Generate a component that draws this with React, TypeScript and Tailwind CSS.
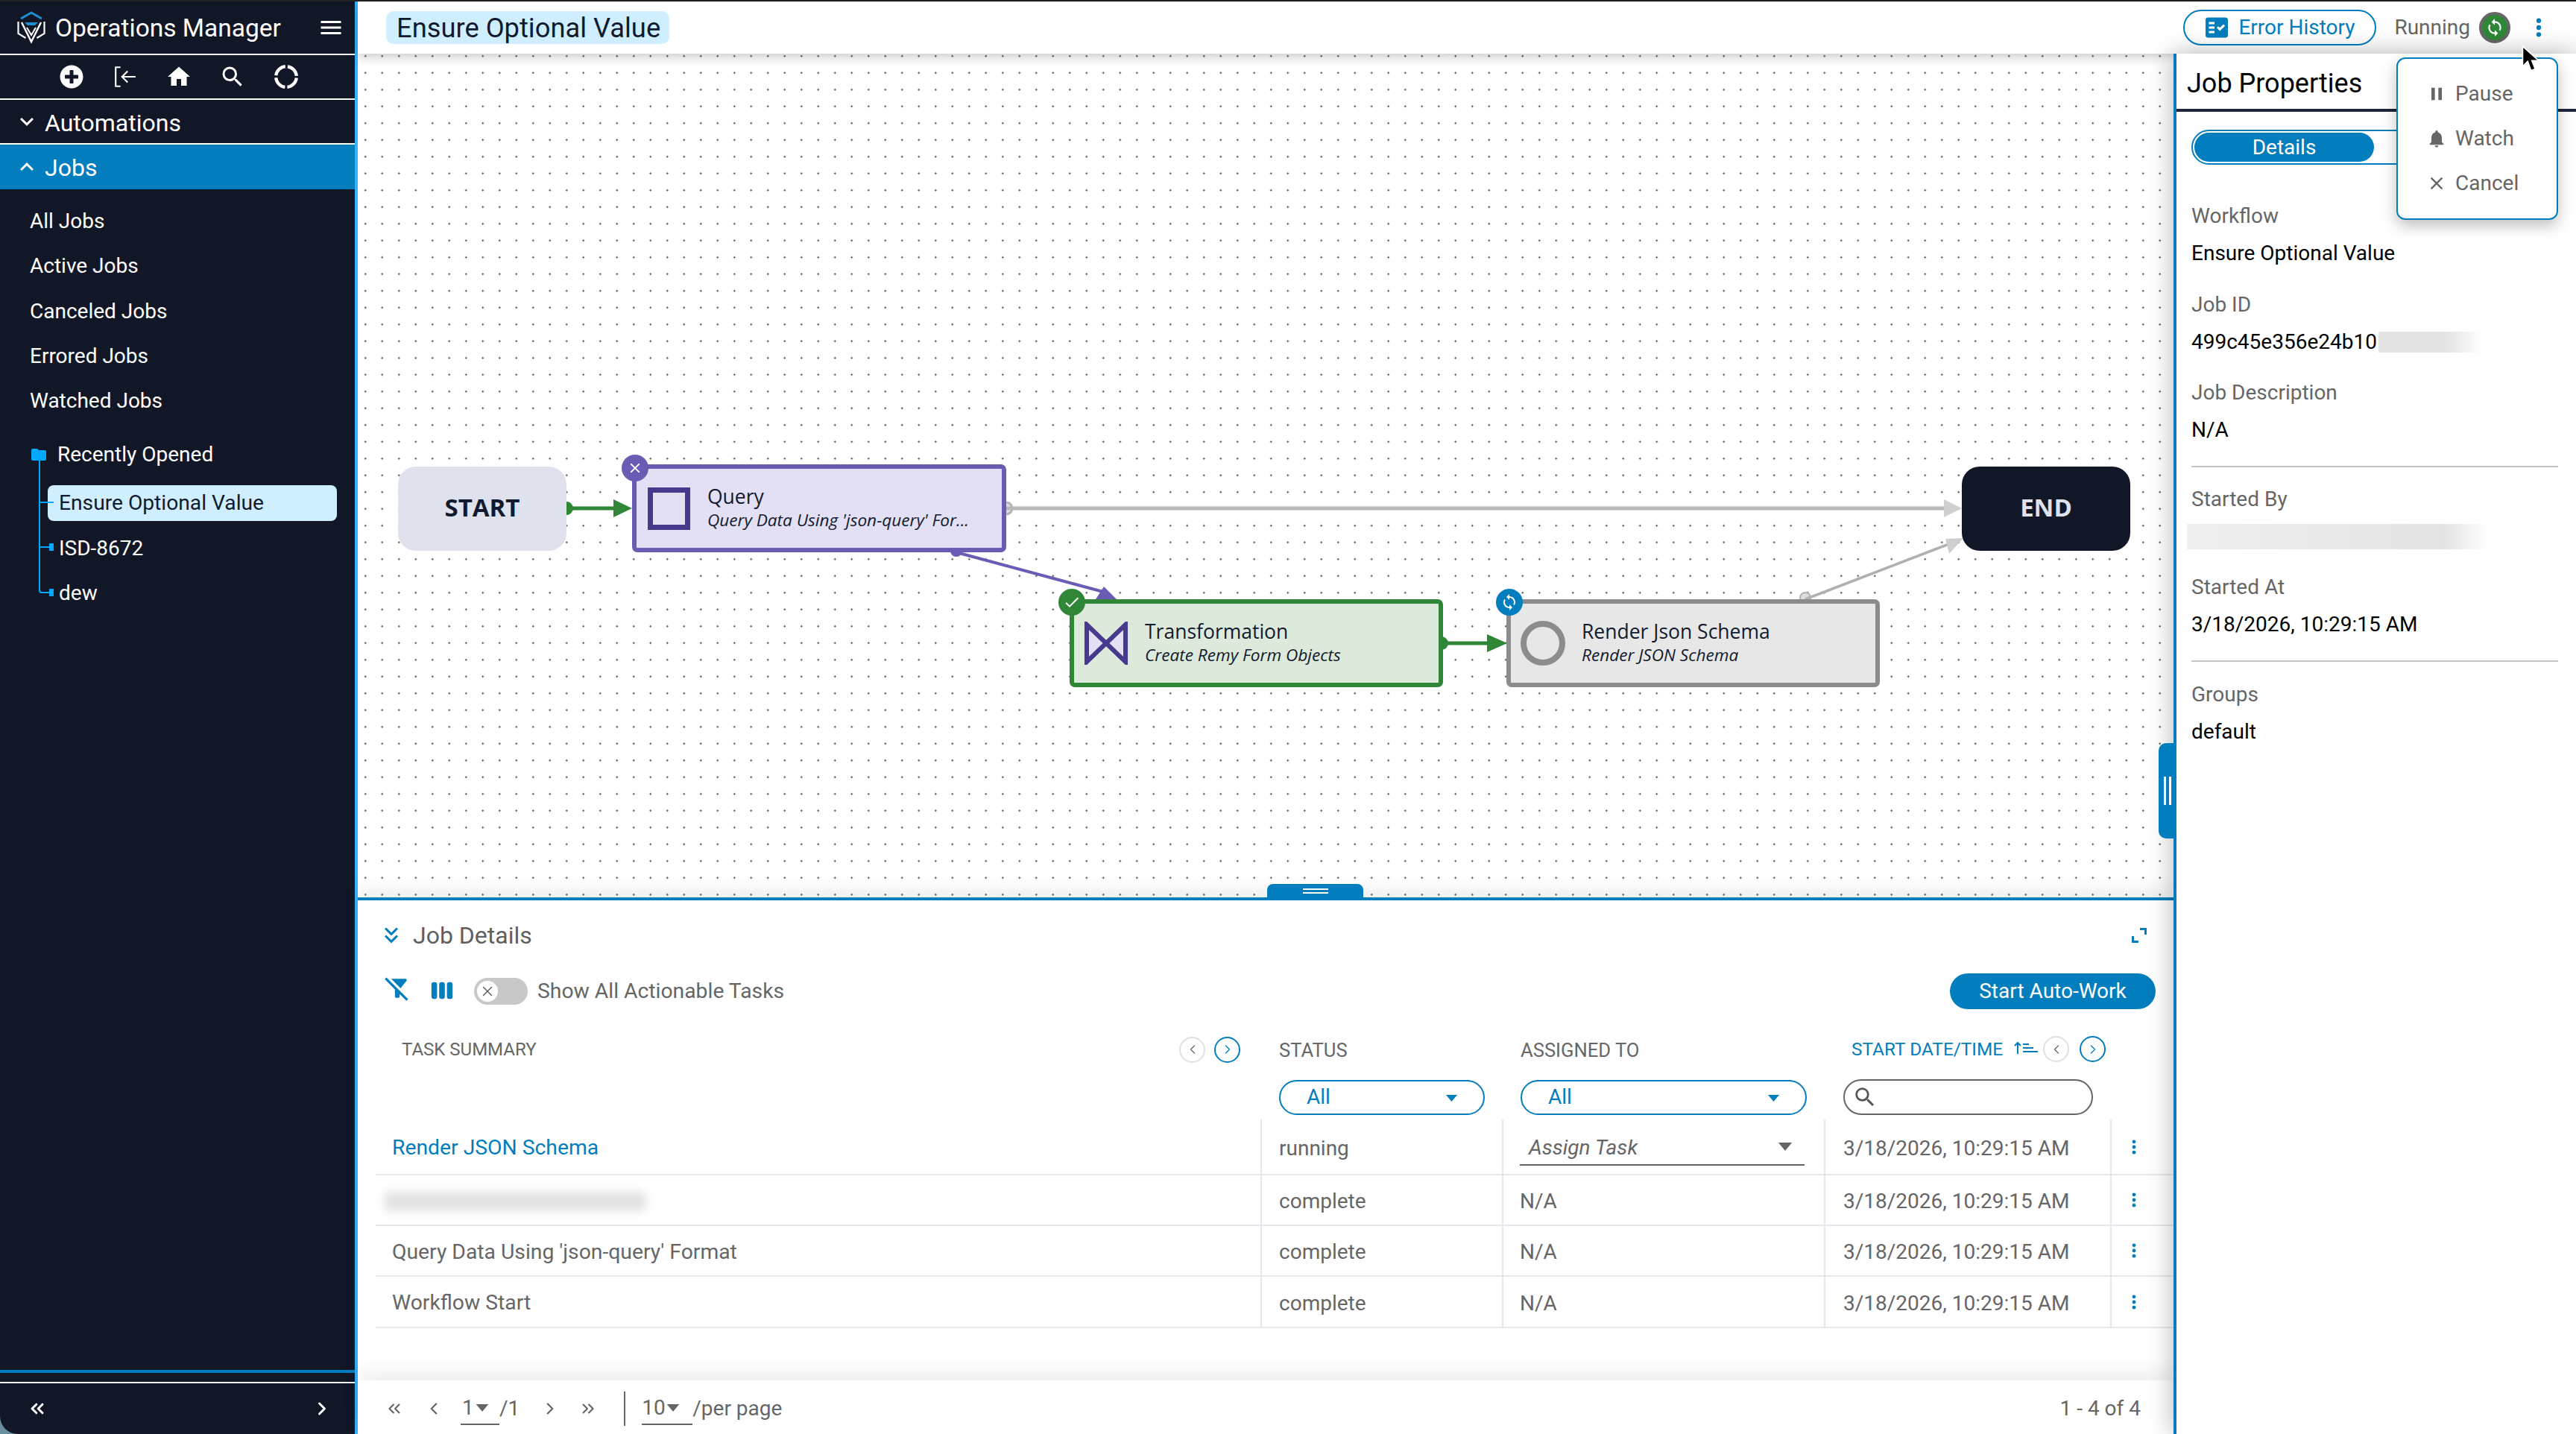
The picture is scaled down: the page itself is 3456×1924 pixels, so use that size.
import type { ReactNode } from "react";
import { ChevronLeft, ChevronRight, ChevronsLeft, ChevronsRight, X } from "lucide-react";
import { FaPlusCircle } from "react-icons/fa";
import {
  MdCheck,
  MdClose,
  MdFactCheck,
  MdFilterAltOff,
  MdFolder,
  MdHome,
  MdKeyboardArrowDown,
  MdKeyboardArrowUp,
  MdKeyboardDoubleArrowDown,
  MdMenu,
  MdNotifications,
  MdPause,
  MdSearch,
  MdSync,
  MdViewWeek,
} from "react-icons/md";

const Logo = () => (
  <svg viewBox="0 0 38 44" className="h-[44px] w-[38px]" fill="none">
    <path d="M5 10 19 2l14 8" stroke="#1b8fd0" strokeWidth="3" />
    <path d="M10 15h18l-4 4H14z" fill="#1b8fd0" />
    <path d="M1.5 14v16l10 6M36.500 14v16l-10 6" stroke="#fff" strokeWidth="2.2" />
    <path d="M6 15l13 26 13-26" stroke="#fff" strokeWidth="2.4" />
    <path d="M13 22l6 10 6-10" stroke="#fff" strokeWidth="2" />
  </svg>
);

const Caret = ({ className }: { className: string }) => (
  <svg viewBox="0 0 20 12" className={className} fill="currentColor">
    <path d="M0 0h20L10 12z" />
  </svg>
);

const Kebab = ({ className }: { className: string }) => (
  <svg viewBox="0 0 8 28" className={className} fill="currentColor">
    <circle cx="4" cy="4" r="3.4" />
    <circle cx="4" cy="14" r="3.4" />
    <circle cx="4" cy="24" r="3.4" />
  </svg>
);

const ToolSlot = ({ children }: { children: ReactNode }) => (
  <div className="flex w-[72px] justify-center">{children}</div>
);

const Sidebar = () => (
  <aside className="flex h-[1922px] w-[480px] shrink-0 flex-col rounded-bl-[24px] border-r-4 border-[#2fb5ff] bg-[#111727] text-white">
    <div className="flex h-[72px] shrink-0 items-center border-b-2 border-white pl-[23px] pr-[14px]">
      <Logo />
      <span className="ml-[13px] pt-[2px] text-[33.5px]">Operations Manager</span>
      <MdMenu className="ml-auto size-[36px]" />
    </div>
    <div className="flex h-[60px] shrink-0 items-center justify-center border-b-2 border-white pl-[4px]">
      <ToolSlot>
        <FaPlusCircle className="size-[32px]" />
      </ToolSlot>
      <ToolSlot>
        <svg viewBox="0 0 30 30" className="size-[32px]" fill="none" stroke="currentColor" strokeWidth="2">
          <path d="M9 3H3v24h6M28 15H11M18 8l-7 7 7 7" />
        </svg>
      </ToolSlot>
      <ToolSlot>
        <MdHome className="size-[36px]" />
      </ToolSlot>
      <ToolSlot>
        <MdSearch className="size-[36px]" />
      </ToolSlot>
      <ToolSlot>
        <svg viewBox="0 0 30 30" className="size-[32px]" fill="none" stroke="currentColor" strokeWidth="4">
          <circle cx="15" cy="15" r="13" strokeDasharray="17.4 3" strokeDashoffset="-1.5" />
        </svg>
      </ToolSlot>
    </div>
    <div className="flex h-[60px] shrink-0 items-center gap-[6px] border-b-2 border-white pl-[18px] text-[32px]">
      <MdKeyboardArrowDown className="size-[36px]" />
      <span className="pt-[3px]">Automations</span>
    </div>
    <div className="flex h-[60px] shrink-0 items-center gap-[6px] bg-[#027dbd] pl-[18px] text-[32px]">
      <MdKeyboardArrowUp className="size-[36px]" />
      <span className="pt-[2px]">Jobs</span>
    </div>
    <nav className="mt-[13px] flex flex-col pl-[40px] text-[28px]">
      {["All Jobs", "Active Jobs", "Canceled Jobs", "Errored Jobs", "Watched Jobs"].map((item) => (
        <div key={item} className="flex h-[60.25px] items-center">
          {item}
        </div>
      ))}
    </nav>
    <div className="relative mt-[18px] flex flex-col text-[28px]">
      <div className="flex h-[48px] items-center pl-[40px]">
        <MdFolder className="size-[24px] text-[#00a8ff]" />
        <span className="ml-[13px]">Recently Opened</span>
      </div>
      <div className="ml-[64px] mt-[17px] flex h-[48px] w-[388px] items-center rounded-[8px] bg-[#cfeeff] pl-[15px] text-[28.2px] text-[#111a2e]">
        Ensure Optional Value
      </div>
      <div className="flex h-[60px] mt-[7px] items-center pl-[79px]">ISD-8672</div>
      <div className="flex h-[60px] items-center pl-[79px]">dew</div>
      <svg viewBox="0 0 30 200" className="absolute left-[50px] top-[30px] h-[200px] w-[30px]" fill="none">
        <path d="M3 0v176a3 3 0 0 0 3 3h16M3 58h19M3 118h19" stroke="#00a8ff" strokeWidth="2" />
        <path d="M16 113h6v10h-6zM16 174h6v10h-6z" fill="#00a8ff" />
      </svg>
    </div>
    <div className="mt-auto h-[4px] shrink-0 bg-[#027dbd]" />
    <div className="mt-[12px] h-[2px] shrink-0 bg-white" />
    <div className="flex h-[68px] shrink-0 items-center justify-between pl-[36px] pr-[30px]">
      <ChevronsLeft className="size-[28px]" strokeWidth={2.5} />
      <ChevronRight className="size-[28px]" strokeWidth={2.5} />
    </div>
  </aside>
);

const TopBar = () => (
  <header className="relative z-10 flex h-[70px] shrink-0 items-center bg-white pl-[38px] shadow-[0_4px_14px_rgba(0,0,0,0.22)]">
    <div className="flex h-[44px] w-[380px] items-center rounded-[10px] bg-[#cfeeff] pl-[14px] pt-[2px] text-[36.3px] text-[#111a2e]">
      Ensure Optional Value
    </div>
    <div className="relative z-30 ml-auto flex items-center">
      <div className="flex h-[48px] w-[259px] items-center rounded-full border-2 border-[#027dbd] pl-[25px] text-[28px] text-[#027dbd]">
        <MdFactCheck className="size-[36px]" />
        <span className="ml-[11px]">Error History</span>
      </div>
      <span className="ml-[24px] text-[28px] text-[#666]">Running</span>
      <div className="ml-[12px] flex size-[42px] items-center justify-center rounded-full border-[4px] border-[#666] bg-[#2f8636] text-white">
        <MdSync className="size-[26px]" />
      </div>
      <Kebab className="ml-[34px] mr-[46px] h-[26px] w-[8px] text-[#027dbd]" />
    </div>
  </header>
);

const NodeBadge = ({ className, children }: { className: string; children: ReactNode }) => (
  <div className={`absolute flex size-[36px] items-center justify-center rounded-full text-white ${className}`}>
    {children}
  </div>
);

const FlowNode = ({
  className,
  icon,
  title,
  text,
}: {
  className: string;
  icon: ReactNode;
  title: string;
  text: string;
}) => (
  <div className={`absolute flex h-[118px] items-center rounded-[7px] border-[6px] ${className}`}>
    <div className="ml-[13px] flex w-[60px] shrink-0 justify-center">{icon}</div>
    <div className="ml-[22px] font-['Open_Sans',sans-serif] text-[#111a2e]">
      <div className="text-[26.5px] leading-[31px]">{title}</div>
      <div className="text-[22.6px] italic leading-[31px]">{text}</div>
    </div>
  </div>
);

const Canvas = () => (
  <div className="relative min-h-0 flex-1 bg-white bg-[radial-gradient(circle,#555_1px,transparent_1.3px)] bg-[size:22.5px_22.5px] bg-[position:-1px_-8px]">
    <svg viewBox="0 0 2436 1132" className="absolute left-0 top-0 h-[1132px] w-[2436px]" fill="none">
      <circle cx="870" cy="610" r="8" fill="#ddd" stroke="#b4b4b4" strokeWidth="3" />
      <path d="M870 610H2130" stroke="#b8b8b8" strokeWidth="5" />
      <path d="M2128 598l24 12-24 12z" fill="#cfcfcf" />
      <circle cx="1942" cy="730" r="7" fill="#ddd" stroke="#b4b4b4" strokeWidth="2" />
      <path d="M1942 732L2150 652" stroke="#b0b0b0" strokeWidth="3.5" />
      <path d="M2130 651l24-1-19 21z" fill="#cfcfcf" />
      <circle cx="803" cy="667" r="8" fill="#6a5bb5" />
      <path d="M803 669L1000 722" stroke="#6a5bb5" strokeWidth="4" />
      <path d="M990 732l11-17 17 17z" fill="#6a5bb5" />
      <circle cx="280" cy="610" r="9" fill="#2f8636" />
      <path d="M280 610h65" stroke="#2f8636" strokeWidth="5" />
      <path d="M343 598l25 12-25 12z" fill="#2f8636" />
      <circle cx="1454" cy="791" r="9" fill="#2f8636" />
      <path d="M1454 791h63" stroke="#2f8636" strokeWidth="5" />
      <path d="M1515 779l27 12-27 12z" fill="#2f8636" />
    </svg>

    <div className="absolute left-[54px] top-[554px] flex h-[113px] w-[226px] items-center justify-center rounded-[24px] bg-[#dfe2ec] pb-[3px] font-['Open_Sans',sans-serif] text-[33px] font-bold text-[#111a2e]">
      START
    </div>
    <FlowNode
      className="left-[368px] top-[551px] w-[502px] border-[#6a5bb5] bg-[#e3e0f5]"
      icon={<div className="size-[57px] border-[7px] border-[#463a8c]" />}
      title="Query"
      text="Query Data Using 'json-query' For..."
    />
    <NodeBadge className="left-[354px] top-[538px] bg-[#6a5bb5]">
      <MdClose className="size-[22px]" />
    </NodeBadge>
    <FlowNode
      className="left-[955px] top-[732px] w-[501px] border-[#2f8636] bg-[#dde9da]"
      icon={
        <svg viewBox="0 0 58 58" className="size-[58px]">
          <path d="M3 4v50l26-25zM55 4v50L29 29z" fill="#e3e0f5" stroke="#463a8c" strokeWidth="6" />
        </svg>
      }
      title="Transformation"
      text="Create Remy Form Objects"
    />
    <NodeBadge className="left-[940px] top-[718px] bg-[#2f8636]">
      <MdCheck className="size-[24px]" />
    </NodeBadge>
    <FlowNode
      className="left-[1541px] top-[732px] w-[501px] border-[#8c8c8c] bg-[#e7e7e7]"
      icon={<div className="size-[60px] rounded-full border-[8px] border-[#8c8c8c]" />}
      title="Render Json Schema"
      text="Render JSON Schema"
    />
    <NodeBadge className="left-[1527px] top-[718px] bg-[#027dbd]">
      <MdSync className="size-[24px]" />
    </NodeBadge>
    <div className="absolute left-[2152px] top-[554px] flex h-[113px] w-[226px] items-center justify-center rounded-[24px] bg-[#111727] pb-[3px] font-['Open_Sans',sans-serif] text-[33px] font-bold text-[#dfe2ec]">
      END
    </div>
  </div>
);

const SelectPill = ({ className, caretClass }: { className: string; caretClass: string }) => (
  <div className={`relative flex h-[47px] items-center rounded-full border-2 border-[#027dbd] pl-[35px] text-[28px] text-[#027dbd] ${className}`}>
    All
    <Caret className={`absolute top-[18px] h-[9px] w-[15px] ${caretClass}`} />
  </div>
);

const PagerButton = ({ className, active, children }: { className?: string; active?: boolean; children: ReactNode }) => (
  <div
    className={`flex size-[35px] items-center justify-center rounded-full border-2 ${
      active ? "border-[#027dbd] text-[#027dbd]" : "border-[#e0e0e0] text-[#666]"
    } ${className ?? ""}`}
  >
    {children}
  </div>
);

const cols = "grid grid-cols-[1187px_324px_432px_384px_60px]";
const cell = "flex items-center border-l-2 border-[#e5e8ec]";

const Row = ({
  height,
  task,
  status,
  assigned,
}: {
  height: string;
  task: ReactNode;
  status: string;
  assigned: ReactNode;
}) => (
  <div className={`${cols} ${height} border-b-2 border-[#e5e8ec] text-[28px] text-[#666]`}>
    <div className="flex items-center pl-[22px] pt-[4px] text-[28.3px]">{task}</div>
    <div className={`${cell} pl-[23px] pt-[4px]`}>{status}</div>
    <div className={`${cell} pl-[22px] pt-[4px]`}>{assigned}</div>
    <div className={`${cell} pl-[24px] pt-[4px]`}>3/18/2026, 10:29:15 AM</div>
    <div className={`${cell} pl-[27px] text-[#027dbd]`}>
      <Kebab className="h-[20px] w-[6px]" />
    </div>
  </div>
);

const JobDetails = () => (
  <section className="relative z-10 flex h-[720px] shrink-0 flex-col border-t-4 border-[#027dbd] bg-white shadow-[0_-10px_24px_rgba(0,0,0,0.08)]">
    <div className="absolute left-[1220px] top-[-22px] flex h-[18px] w-[129px] flex-col items-center justify-center gap-[3px] rounded-t-[8px] bg-[#027dbd]">
      <div className="h-[2px] w-[34px] bg-white" />
      <div className="h-[2px] w-[34px] bg-white" />
    </div>

    <div className="flex h-[94px] shrink-0 items-center pl-[27px] pr-[36px]">
      <MdKeyboardDoubleArrowDown className="size-[36px] text-[#027dbd]" />
      <span className="ml-[11px] text-[32px] text-[#5f5f5f]">Job Details</span>
      <svg viewBox="0 0 20 20" className="ml-auto size-[20px]" fill="none" stroke="#027dbd" strokeWidth="3">
        <path d="M11 1.5h7.5V9M1.5 11v7.5H9" />
      </svg>
    </div>

    <div className="flex h-[56px] shrink-0 items-center pl-[34px] pr-[24px]">
      <MdFilterAltOff className="mb-[8px] size-[38px] text-[#027dbd]" />
      <MdViewWeek className="mb-[3px] ml-[24px] size-[34px] text-[#027dbd]" />
      <div className="ml-[26px] flex h-[36px] w-[72px] items-center rounded-full bg-[#c8c8c8] pl-[4px]">
        <div className="flex h-[28px] w-[28px] items-center justify-center rounded-full bg-white text-[#555]">
          <X className="size-[22px]" strokeWidth={1.5} />
        </div>
      </div>
      <span className="ml-[13px] text-[28.3px] text-[#666]">Show All Actionable Tasks</span>
      <div className="ml-auto flex h-[48px] w-[276px] items-center justify-center rounded-full bg-[#027dbd] text-[28px] text-white">
        Start Auto-Work
      </div>
    </div>

    <div className="ml-[24px] mt-[22px] flex flex-col">
      <div className={`${cols} h-[56px] items-center text-[24px] text-[#666]`}>
        <div className="flex items-center pl-[35px]">
          TASK SUMMARY
          <PagerButton className="ml-auto">
            <ChevronLeft className="size-[20px]" strokeWidth={1.5} />
          </PagerButton>
          <PagerButton className="ml-[12px] mr-[27px]" active>
            <ChevronRight className="size-[20px]" strokeWidth={1.5} />
          </PagerButton>
        </div>
        <div className="pl-[25px] pt-[3px] text-[25.6px]">STATUS</div>
        <div className="pl-[25px] pt-[3px] text-[25.6px]">ASSIGNED TO</div>
        <div className="flex items-center pl-[37px] text-[24.4px] text-[#027dbd]">
          START DATE/TIME
          <svg viewBox="0 0 32 18" className="mb-[4px] ml-[15px] h-[18px] w-[32px]" fill="none" stroke="#027dbd" strokeWidth="2">
            <path d="M5 17V2M1 6l4-4 4 4M12 4h8M12 9h14M12 14h20" />
          </svg>
          <PagerButton className="ml-[7px]">
            <ChevronLeft className="size-[20px]" strokeWidth={1.5} />
          </PagerButton>
          <PagerButton className="ml-[14px]" active>
            <ChevronRight className="size-[20px]" strokeWidth={1.5} />
          </PagerButton>
        </div>
      </div>
      <div className={`${cols} mt-[12px] h-[48px] items-center`}>
        <div />
        <div className="pl-[25px]">
          <SelectPill className="w-[276px]" caretClass="left-[222px]" />
        </div>
        <div className="pl-[25px]">
          <SelectPill className="w-[384px]" caretClass="left-[330px]" />
        </div>
        <div className="pl-[26px]">
          <div className="flex h-[48px] w-[335px] items-center rounded-full border-2 border-[#666] pl-[10px] text-[#555]">
            <MdSearch className="size-[34px]" />
          </div>
        </div>
      </div>
      <div className="mt-[6px] flex flex-col">
        <Row
          height="h-[75px]"
          task={<span className="text-[#027dbd]">Render JSON Schema</span>}
          status="running"
          assigned={
            <div className="relative flex h-[46px] w-[382px] items-center border-b-2 border-[#666] pl-[12px] italic">
              Assign Task
              <Caret className="absolute left-[346px] top-[15px] h-[11px] w-[20px]" />
            </div>
          }
        />
        <Row
          height="h-[68px]"
          task={<div className="ml-[-10px] h-[26px] w-[350px] bg-[#e2e2e2] blur-[6px]" />}
          status="complete"
          assigned="N/A"
        />
        <Row height="h-[68px]" task="Query Data Using 'json-query' Format" status="complete" assigned="N/A" />
        <Row height="h-[69px]" task="Workflow Start" status="complete" assigned="N/A" />
      </div>
    </div>

    <footer className="mt-auto flex h-[72px] shrink-0 items-center bg-white pl-[36px] pr-[44px] pt-[4px] text-[28px] text-[#666] shadow-[0_-14px_24px_rgba(0,0,0,0.06)]">
      <ChevronsLeft className="size-[26px]" strokeWidth={2} />
      <ChevronLeft className="ml-[27px] size-[26px]" strokeWidth={2} />
      <div className="ml-[23px] flex h-[44px] w-[52px] items-center border-b-2 border-[#666] pl-[2px]">
        1<Caret className="ml-[2px] h-[10px] w-[18px]" />
      </div>
      <span>/1</span>
      <ChevronRight className="ml-[28px] size-[26px]" strokeWidth={2} />
      <ChevronsRight className="ml-[25px] size-[26px]" strokeWidth={2} />
      <div className="ml-[35px] h-[46px] w-[2px] bg-[#666]" />
      <div className="ml-[22px] flex h-[44px] w-[68px] items-center border-b-2 border-[#666]">
        10<Caret className="ml-[1px] h-[10px] w-[18px]" />
      </div>
      <span>/per page</span>
      <span className="ml-auto">1 - 4 of 4</span>
    </footer>
  </section>
);

const Prop = ({ label, value, className }: { label: string; value: ReactNode; className: string }) => (
  <div className={className}>
    <div className="flex h-[34px] items-center text-[#666]">{label}</div>
    <div className="mt-[16px] flex h-[34px] items-center text-black">{value}</div>
  </div>
);

const PropertiesPanel = () => (
  <aside className="relative z-20 w-[540px] shrink-0 border-l-4 border-[#027dbd] bg-white shadow-[0_0_32px_rgba(0,0,0,0.3)]">
    <div className="absolute left-[-24px] top-[925px] flex h-[128px] w-[24px] items-center justify-center gap-[4px] rounded-l-[10px] bg-[#027dbd]">
      <div className="h-[38px] w-[3px] bg-white" />
      <div className="h-[38px] w-[3px] bg-white" />
    </div>
    <div className="flex h-[78px] items-center border-b-4 border-[#1f2437] pl-[14px] pt-[6px] text-[36px] text-black">
      Job Properties
    </div>
    <div className="ml-[20px] mt-[24px] h-[47px] w-[480px] rounded-full border-2 border-[#027dbd] p-[2px]">
      <div className="flex h-[39px] w-[241px] items-center justify-center rounded-full bg-[#027dbd] text-[28px] text-white">
        Details
      </div>
    </div>
    <div className="pl-[20px] text-[28px]">
      <Prop className="mt-[52px]" label="Workflow" value="Ensure Optional Value" />
      <Prop
        className="mt-[34.5px]"
        label="Job ID"
        value={
          <>
            499c45e356e24b10
            <span className="ml-[2px] h-[28px] w-[140px] bg-[linear-gradient(90deg,#e4e4e4,#e4e4e4_65%,#fff)]" />
          </>
        }
      />
      <Prop className="mt-[34.5px]" label="Job Description" value="N/A" />
      <div className="mt-[31px] h-[2px] w-[492px] bg-[#c4c4c4]" />
      <Prop
        className="mt-[26px]"
        label="Started By"
        value={<span className="ml-[-6px] h-[34px] w-[406px] bg-[linear-gradient(90deg,#efefef,#e4e4e4_85%,#fff)]" />}
      />
      <Prop className="mt-[34px]" label="Started At" value="3/18/2026, 10:29:15 AM" />
      <div className="mt-[31px] h-[2px] w-[492px] bg-[#c4c4c4]" />
      <Prop className="mt-[27px]" label="Groups" value="default" />
    </div>
    <div className="absolute left-[295px] top-[5px] z-30 flex h-[218px] w-[217px] flex-col justify-center gap-[26px] rounded-[12px] border-2 border-[#027dbd] bg-white pl-[38px] text-[28px] text-[#666] shadow-[0_8px_20px_rgba(0,0,0,0.25)]">
      <div className="flex h-[34px] items-center gap-[11px]">
        <MdPause className="size-[28px]" />
        Pause
      </div>
      <div className="flex h-[34px] items-center gap-[11px]">
        <MdNotifications className="size-[28px]" />
        Watch
      </div>
      <div className="flex h-[34px] items-center gap-[11px]">
        <MdClose className="size-[28px]" />
        Cancel
      </div>
    </div>
  </aside>
);

export default function App() {
  return (
    <div className="relative flex h-[1924px] w-[3456px] flex-col overflow-hidden bg-white font-['Roboto',sans-serif]">
      <div className="h-[2px] shrink-0 bg-[#222]" />
      <div className="flex min-h-0 flex-1 bg-[#6a8f9f]">
        <Sidebar />
        <main className="flex min-w-0 flex-1 flex-col bg-white">
          <TopBar />
          <div className="flex min-h-0 flex-1">
            <div className="flex min-w-0 flex-1 flex-col">
              <Canvas />
              <JobDetails />
            </div>
            <PropertiesPanel />
          </div>
        </main>
      </div>
      <svg viewBox="0 0 22 34" className="absolute left-[3382px] top-[60px] z-40 h-[38px] w-[25px]">
        <path d="M2 2v24l6-6 4 11 5-2-4-10h8z" fill="#000" stroke="#fff" strokeWidth="1.5" />
      </svg>
    </div>
  );
}
